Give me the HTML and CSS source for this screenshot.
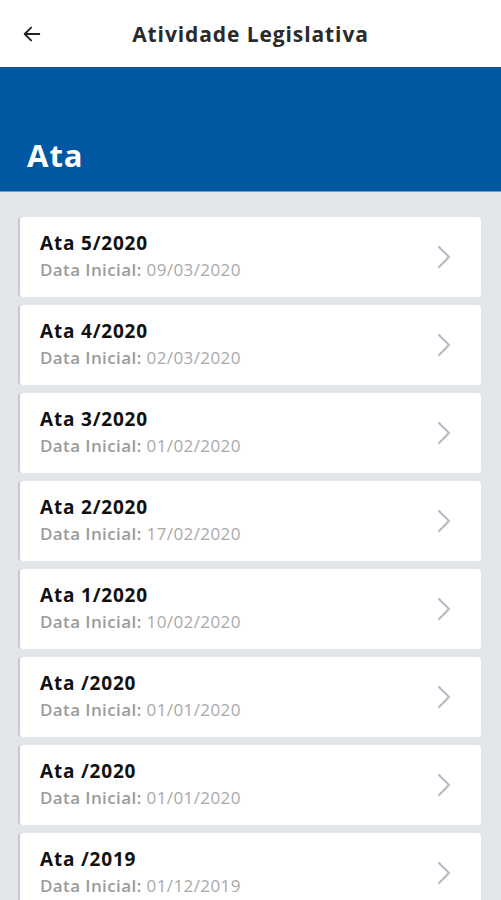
FILE: index.html
```html
<!DOCTYPE html>
<html lang="pt">
<head>
<meta charset="utf-8">
<link rel="stylesheet" href="styles.css">
</head>
<body>
<header class="topbar">
  <svg class="back" width="22" height="22" viewBox="0 0 24 24"><path d="M20 12H4M11 5l-7 7 7 7" fill="none" stroke="#222" stroke-width="2" stroke-linecap="round" stroke-linejoin="round"/></svg>
  <h1 class="title">Atividade Legislativa</h1>
</header>
<section class="banner"><h2>Ata</h2></section>
<main class="list">
  <div class="card"><div class="txt"><div class="name">Ata 5/2020</div><div class="sub"><span class="lbl">Data Inicial:</span> 09/03/2020</div></div><svg class="chev" viewBox="0 0 14 24"><path d="M2 2l10 10-10 10" fill="none" stroke="#b4bcc6" stroke-width="2.2" stroke-linecap="round" stroke-linejoin="round"/></svg></div>
  <div class="card"><div class="txt"><div class="name">Ata 4/2020</div><div class="sub"><span class="lbl">Data Inicial:</span> 02/03/2020</div></div><svg class="chev" viewBox="0 0 14 24"><path d="M2 2l10 10-10 10" fill="none" stroke="#b4bcc6" stroke-width="2.2" stroke-linecap="round" stroke-linejoin="round"/></svg></div>
  <div class="card"><div class="txt"><div class="name">Ata 3/2020</div><div class="sub"><span class="lbl">Data Inicial:</span> 01/02/2020</div></div><svg class="chev" viewBox="0 0 14 24"><path d="M2 2l10 10-10 10" fill="none" stroke="#b4bcc6" stroke-width="2.2" stroke-linecap="round" stroke-linejoin="round"/></svg></div>
  <div class="card"><div class="txt"><div class="name">Ata 2/2020</div><div class="sub"><span class="lbl">Data Inicial:</span> 17/02/2020</div></div><svg class="chev" viewBox="0 0 14 24"><path d="M2 2l10 10-10 10" fill="none" stroke="#b4bcc6" stroke-width="2.2" stroke-linecap="round" stroke-linejoin="round"/></svg></div>
  <div class="card"><div class="txt"><div class="name">Ata 1/2020</div><div class="sub"><span class="lbl">Data Inicial:</span> 10/02/2020</div></div><svg class="chev" viewBox="0 0 14 24"><path d="M2 2l10 10-10 10" fill="none" stroke="#b4bcc6" stroke-width="2.2" stroke-linecap="round" stroke-linejoin="round"/></svg></div>
  <div class="card"><div class="txt"><div class="name">Ata /2020</div><div class="sub"><span class="lbl">Data Inicial:</span> 01/01/2020</div></div><svg class="chev" viewBox="0 0 14 24"><path d="M2 2l10 10-10 10" fill="none" stroke="#b4bcc6" stroke-width="2.2" stroke-linecap="round" stroke-linejoin="round"/></svg></div>
  <div class="card"><div class="txt"><div class="name">Ata /2020</div><div class="sub"><span class="lbl">Data Inicial:</span> 01/01/2020</div></div><svg class="chev" viewBox="0 0 14 24"><path d="M2 2l10 10-10 10" fill="none" stroke="#b4bcc6" stroke-width="2.2" stroke-linecap="round" stroke-linejoin="round"/></svg></div>
  <div class="card"><div class="txt"><div class="name">Ata /2019</div><div class="sub"><span class="lbl">Data Inicial:</span> 01/12/2019</div></div><svg class="chev" viewBox="0 0 14 24"><path d="M2 2l10 10-10 10" fill="none" stroke="#b4bcc6" stroke-width="2.2" stroke-linecap="round" stroke-linejoin="round"/></svg></div>
</main>
</body>
</html>
```
FILE: styles.css
```css
html, body {
  margin: 0;
  padding: 0;
  height: 900px;
  overflow: hidden;
  background: #e3e6e9;
  font-family: "Open Sans", "Liberation Sans", sans-serif;
}
.topbar {
  height: 68px;
  background: #fff;
  display: flex;
  align-items: center;
  position: relative;
  border-bottom: 1px solid #1d4e80;
  box-sizing: border-box;
}
.back {
  position: absolute;
  left: 21px;
  top: 23px;
}
.title {
  flex: 1;
  margin: 0;
  text-align: center;
  font-size: 21px;
  font-weight: 700;
  color: #2a2a2a;
  letter-spacing: 0.9px;
  padding-top: 1px;
}
.banner {
  height: 124px;
  background: #0158a2;
  border-bottom: 1px solid #6f9fd0;
  box-sizing: border-box;
  display: flex;
  align-items: flex-end;
  padding: 0 0 20px 27px;
}
.banner h2 {
  margin: 0;
  color: #fff;
  font-size: 31px;
  font-weight: 700;
  line-height: 32px;
  letter-spacing: 1px;
}
.list {
  padding: 25px 20px 0 18px;
  display: flex;
  flex-direction: column;
  gap: 8px;
}
.card {
  height: 80px;
  background: #fff;
  border-radius: 4px;
  border-left: 2px solid #c3cad3;
  box-sizing: border-box;
  display: flex;
  align-items: center;
  padding: 0 30px 0 20px;
}
.txt { flex: 1; }
.name {
  font-size: 19px;
  font-weight: 700;
  color: #111;
  line-height: 26px;
  letter-spacing: 0.8px;
}
.sub {
  font-size: 17px;
  color: #a9a9a9;
  line-height: 28px;
  letter-spacing: 0.4px;
}
.lbl { color: #9b9b9b; font-weight: 600; }
.chev {
  width: 14px;
  height: 24px;
}
```
